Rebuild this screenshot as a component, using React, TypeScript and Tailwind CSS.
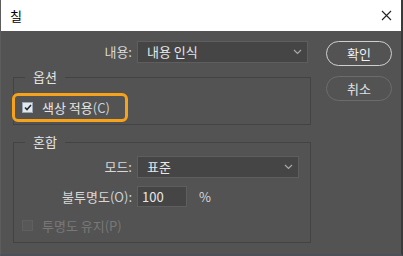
import React from "react";

const FONT = { fontFamily: '"Malgun Gothic", "Noto Sans CJK KR", "Noto Sans", sans-serif' };

function Chevron() {
  return (
    <svg width="9" height="6" viewBox="0 0 9 6" className="shrink-0">
      <path d="M1 1 L4.5 4.5 L8 1" fill="none" stroke="#a8a8a8" strokeWidth="1.2" />
    </svg>
  );
}

function Select({ value, width }: { value: string; width: string }) {
  return (
    <div
      className={`${width} h-[22px] bg-[#454545] border border-[#5e5e5e] flex items-center justify-between pl-[9px] pr-[5px] text-[13px] text-[#e8e8e8]`}
    >
      <span>{value}</span>
      <Chevron />
    </div>
  );
}

function Legend({ children }: { children: React.ReactNode }) {
  return (
    <legend className="ml-[11px] px-[8px] text-[13px] leading-[16px] text-[#e4e4e4]">{children}</legend>
  );
}

export default function App() {
  return (
    <div
      className="w-[403px] h-[256px] bg-[#535353] flex flex-col border-r-[2px] border-r-[#3a3a3a] border-l border-l-[#5d5d5d] border-b-[2px] border-b-[#4c5157]"
      style={FONT}
    >
      {/* 타이틀바 */}
      <div className="h-[31px] bg-white flex items-center justify-between pl-[9px] pr-[9px] shrink-0">
        <span className="text-[13px] text-black">칠</span>
        <svg width="11" height="11" viewBox="0 0 11 11">
          <path d="M1 1 L10 10 M10 1 L1 10" stroke="#222" strokeWidth="1.1" />
        </svg>
      </div>

      <div className="flex pt-[10px]">
        {/* 왼쪽 */}
        <div className="w-[298px] ml-[12px] flex flex-col">
          <div className="flex items-center h-[22px]">
            <span className="w-[124px] text-right pr-[5px] text-[13px] text-[#d8d8d8]">내용:</span>
            <Select value="내용 인식" width="w-[171px]" />
          </div>

          <fieldset className="mt-[6px] border border-[#434343] h-[56px] px-0">
            <Legend>옵션</Legend>
            <div className="-ml-[2px] mt-[8px] w-[116px] h-[29px] border-[3px] border-[#f7a21b] rounded-[6px] flex items-center pl-[7px] gap-[9px]">
              <span className="w-[11px] h-[11px] bg-[#e2e8ef] border border-[#9aa7b4] flex items-center justify-center">
                <svg width="8" height="7" viewBox="0 0 8 7">
                  <path d="M1 3.5 L3 5.5 L7 1" fill="none" stroke="#2a2a2a" strokeWidth="1.6" />
                </svg>
              </span>
              <span className="text-[13px] text-[#e6e6e6]">
                색상 적용<span className="text-[#c9d3de]">(C)</span>
              </span>
            </div>
          </fieldset>

          <fieldset className="mt-[9px] border border-[#434343] h-[109px] px-0">
            <Legend>혼합</Legend>
            <div className="flex items-center h-[22px] mt-[6px]">
              <span className="w-[123px] text-right pr-[5px] text-[13px] text-[#d8d8d8]">모드:</span>
              <Select value="표준" width="w-[162px]" />
            </div>
            <div className="flex items-center h-[21px] mt-[8px]">
              <span className="w-[123px] text-right pr-[5px] text-[13px] text-[#d8d8d8]">
                불투명도<span className="text-[#c9d3de]">(O)</span>:
              </span>
              <div className="w-[50px] h-[21px] bg-[#454545] border border-[#5e5e5e] flex items-center pl-[4px] text-[13px] text-[#e8e8e8]">
                100
              </div>
              <span className="ml-[12px] text-[13px] text-[#d8d8d8]">%</span>
            </div>
            <div className="flex items-center mt-[9px] pl-[8px] gap-[9px]">
              <span className="w-[11px] h-[11px] bg-[#585858] border border-[#5f5f5f]" />
              <span className="text-[13px] text-[#787878]">투명도 유지(P)</span>
            </div>
          </fieldset>
        </div>

        {/* 버튼 */}
        <div className="ml-[15px] flex flex-col gap-[10px]">
          <button className="w-[66px] h-[25px] rounded-full border-[1.5px] border-[#cfcfcf] text-[13px] text-[#f0f0f0] flex items-center justify-center">
            확인
          </button>
          <button className="w-[66px] h-[25px] rounded-full border-[1.5px] border-[#6c6c6c] text-[13px] text-[#e0e0e0] flex items-center justify-center">
            취소
          </button>
        </div>
      </div>
    </div>
  );
}
